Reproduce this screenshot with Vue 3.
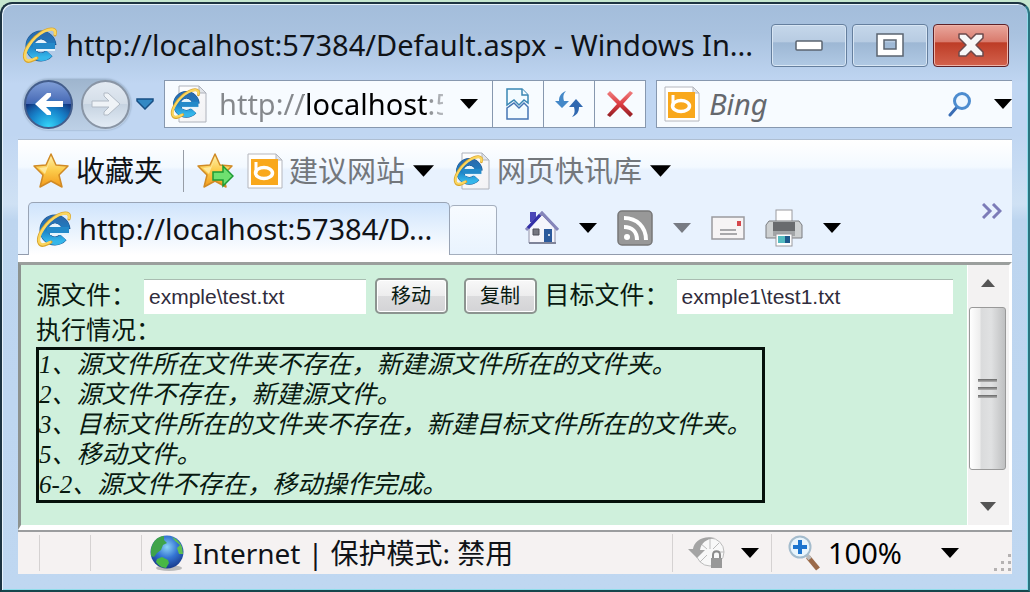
<script setup>
import { ref } from 'vue'

const address = ref('http://localhost:57384/Default.aspx')
const search = ref('')
const source = ref('exmple\\test.txt')
const target = ref('exmple1\\test1.txt')
const log = [
  '1、源文件所在文件夹不存在，新建源文件所在的文件夹。',
  '2、源文件不存在，新建源文件。',
  '3、目标文件所在的文件夹不存在，新建目标文件所在的文件夹。',
  '5、移动文件。',
  '6-2、源文件不存在，移动操作完成。'
]
</script>

<template>
  <svg class="sprites" width="0" height="0" aria-hidden="true">
    <defs>
      <linearGradient id="ieBlue" x1="0" y1="0" x2="0" y2="1">
        <stop offset="0" stop-color="#2a6cae" />
        <stop offset=".5" stop-color="#1c7fc4" />
        <stop offset="1" stop-color="#35b6ea" />
      </linearGradient>
      <linearGradient id="gold" x1="0" y1="0" x2="0" y2="1">
        <stop offset="0" stop-color="#fff3b0" />
        <stop offset=".5" stop-color="#fccb4a" />
        <stop offset="1" stop-color="#f39a1b" />
      </linearGradient>
      <linearGradient id="paper" x1="0" y1="0" x2="1" y2="1">
        <stop offset="0" stop-color="#ffffff" />
        <stop offset="1" stop-color="#f1f1f4" />
      </linearGradient>
    </defs>
    <symbol id="ie" viewBox="0 0 36 36">
      <circle cx="19" cy="19" r="11" fill="none" stroke="#1c5590" stroke-width="9" stroke-dasharray="60 10" stroke-dashoffset="-8" />
      <circle cx="19" cy="19" r="11" fill="none" stroke="url(#ieBlue)" stroke-width="8" stroke-dasharray="59 10" stroke-dashoffset="-8" />
      <path d="M11 16h22v6H11z" fill="#2389c9" />
      <path d="M13 16q6-7 12 0z" fill="#e6f4fd" />
      <path d="M14 23h19" stroke="#e6f4fd" stroke-width="2" />
      <path d="M33 8C35 2 30 0 22 4C10 10 0 25 3 32C5 37 12 33 15 31" fill="none" stroke="#d9a62e" stroke-width="3" stroke-linecap="round" />
      <path d="M33 7C34 2 29 1 22 4.500C10 11 1 25 3.500 31.500C5 35 10 33 14 31" fill="none" stroke="#fbd65f" stroke-width="2.500" stroke-linecap="round" />
    </symbol>
    <symbol id="iepage" viewBox="0 0 38 38">
      <path d="M9 1H29L36 8V37H9z" fill="url(#paper)" stroke="#aeb2bb" />
      <path d="M29 1V8H36z" fill="#e1e4e9" stroke="#aeb2bb" />
      <svg x="0" y="3" width="31" height="31" viewBox="0 0 36 36"><use href="#ie" /></svg>
    </symbol>
    <symbol id="bingpage" viewBox="0 0 36 36">
      <path d="M1 1H29L35 7V35H1z" fill="#fff" stroke="#b4b6bd" />
      <path d="M29 1V7H35z" fill="#e4e6ea" stroke="#b4b6bd" />
      <path d="M4 6H31V32H4z" fill="#f9a81c" />
      <path d="M9 9V20" stroke="#fff" stroke-width="3" />
      <ellipse cx="17" cy="20" rx="8.500" ry="5.500" fill="none" stroke="#fff" stroke-width="3.500" />
    </symbol>
    <symbol id="star" viewBox="0 0 38 38">
      <path d="M19 2L24 13L36 14L27 23L30 35L19 29L8 35L11 23L2 14L14 13z" fill="url(#gold)" stroke="#d08a25" stroke-width="1.500" stroke-linejoin="round" />
      <path d="M19 6L15 15L7 16L13 22z" fill="#fff8cc" opacity=".6" />
    </symbol>
    <symbol id="down" viewBox="0 0 18 10">
      <path d="M0 0H18L9 10z" fill="currentColor" />
    </symbol>
  </svg>

  <main class="window">
    <header class="titlebar">
      <svg class="i36"><use href="#ie" /></svg>
      <h1>http://localhost:57384/Default.aspx - Windows In...</h1>
      <button class="caption" aria-label="最小化">
        <svg width="28" height="11" viewBox="0 0 28 11"><rect x="1" y="1" width="26" height="9" rx="1" fill="#fff" stroke="#5b6470" stroke-width="1.500" /></svg>
      </button>
      <button class="caption" aria-label="最大化">
        <svg width="28" height="24" viewBox="0 0 28 24"><path d="M1 1H27V23H1zM8 7V16H20V7z" fill="#fff" fill-rule="evenodd" stroke="#5b6470" stroke-width="1.500" /></svg>
      </button>
      <button class="caption close" aria-label="关闭">
        <svg width="28" height="24" viewBox="0 0 28 24"><path d="M2 1H9L14 6L19 1H26V5L19 12L26 19V23H19L14 18L9 23H2V19L9 12L2 5z" fill="#f7f7f7" stroke="#6b4a4c" stroke-width="1.500" stroke-linejoin="round" /></svg>
      </button>
    </header>

    <nav class="navbar">
      <div class="travel">
        <button class="round back" aria-label="后退">
          <svg width="28" height="28" viewBox="0 0 28 28"><path d="M0 14L12 3H16V6L11 11H28V17H11L16 22V25H12z" fill="#fff" /></svg>
        </button>
        <button class="round forward" aria-label="前进">
          <svg width="30" height="28" viewBox="0 0 30 28"><path d="M29 14L17 3H13V6L18 11H1V17H18L13 22V25H17z" fill="#eff3f7" stroke="#b1bac5" /></svg>
        </button>
      </div>
      <button class="plain recent" aria-label="最近的网页">
        <svg width="18" height="12" viewBox="0 0 18 12"><path d="M1 1H17V3L9 11L1 3z" fill="#3288c4" stroke="#174f84" stroke-width="1.500" /></svg>
      </button>
      <div class="addressbox">
        <svg class="i38"><use href="#iepage" /></svg>
        <input v-model="address" class="url" aria-label="地址" />
        <button class="plain urldrop" aria-label="显示地址"><svg class="arrow"><use href="#down" /></svg></button>
        <button class="cell" aria-label="兼容性视图">
          <svg width="24" height="32" viewBox="0 0 24 32" fill="#f3fbff" stroke="#3a87b4" stroke-width="1.500">
            <path d="M1 17V1H16L22 7V15L18 12L13 17L8 12z" /><path d="M16 1V7H22" />
            <path d="M1 20L8 15L13 20L18 15L22 19V31H1z" stroke="#4575b4" />
          </svg>
        </button>
        <button class="cell" aria-label="刷新">
          <svg width="28" height="26" viewBox="0 0 28 26">
            <path d="M11 0C6 2 4 5 4 10H0L7 17L14 10H9C8 6 8 3 11 0z" fill="#4488c8" />
            <path d="M17 26C22 24 24 21 24 16H28L21 8L14 16H19C20 20 20 23 17 26z" fill="#3068b0" />
          </svg>
        </button>
        <button class="cell" aria-label="停止">
          <svg width="26" height="26" viewBox="0 0 26 26">
            <defs><linearGradient id="stopRed" x1="0" y1="0" x2="0" y2="1"><stop offset="0" stop-color="#f08080" /><stop offset=".5" stop-color="#dc3c42" /><stop offset="1" stop-color="#8f1c22" /></linearGradient></defs>
            <path d="M3 0L13 10L23 0L26 2L16 13L26 23L23 26L13 16L3 26L0 24L10 13L0 3z" fill="url(#stopRed)" />
          </svg>
        </button>
      </div>
      <div class="searchbox">
        <svg class="i36"><use href="#bingpage" /></svg>
        <input v-model="search" class="query" placeholder="Bing" aria-label="搜索" />
        <button class="plain" aria-label="搜索">
          <svg width="24" height="25" viewBox="0 0 24 25" fill="none" stroke-linecap="round"><path d="M9 15L2 23" stroke="#3a6db5" stroke-width="3" /><circle cx="14" cy="9" r="7.500" fill="#eef7ff" stroke="#4d8ccf" stroke-width="3" /></svg>
        </button>
        <button class="plain searchdrop" aria-label="搜索选项"><svg class="arrow"><use href="#down" /></svg></button>
      </div>
    </nav>

    <section class="commands">
      <div class="favorites">
        <button class="plain"><svg class="i38"><use href="#star" /></svg><span class="dark">收藏夹</span></button>
        <span class="rule"></span>
        <button class="plain" aria-label="添加到收藏夹栏">
          <svg class="i38" viewBox="0 0 38 38"><use href="#star" /><path d="M17 20H27V14L37 24L27 34V28H17z" fill="#6fe070" stroke="#1d9a35" stroke-width="1.500" /></svg>
        </button>
        <button class="plain suggested"><svg class="i36"><use href="#bingpage" /></svg><span>建议网站</span><svg class="arrow big"><use href="#down" /></svg></button>
        <button class="plain slices"><svg class="i38"><use href="#iepage" /></svg><span>网页快讯库</span><svg class="arrow big"><use href="#down" /></svg></button>
      </div>

      <div class="tabs">
        <button class="tab"><svg class="i36"><use href="#ie" /></svg><span>http://localhost:57384/D...</span></button>
        <button class="newtab" aria-label="新选项卡"></button>
        <div class="tools">
          <button class="plain" aria-label="主页">
            <svg width="34" height="36" viewBox="0 0 34 36">
              <path d="M5 2H11V12H5z" fill="#4a46b8" />
              <path d="M4 18L17 5L30 18V33H4z" fill="#f5f5fb" stroke="#9292a8" />
              <path d="M1 20L17 3L33 20" fill="none" stroke="#8585ba" stroke-width="3" />
              <path d="M3 18L15 5" stroke="#332fa8" stroke-width="3" />
              <path d="M8 19H14V25H8z" fill="#777780" stroke="#4f4f58" />
              <path d="M19 19H27V33H19z" fill="#2c5a9c" />
              <path d="M4 33H31" stroke="#7f8499" stroke-width="2" />
              <circle cx="24" cy="25" r="1" fill="#fff" />
            </svg>
          </button>
          <button class="plain" aria-label="主页选项"><svg class="arrow"><use href="#down" /></svg></button>
          <button class="plain" aria-label="源">
            <svg width="36" height="36" viewBox="0 0 36 36">
              <rect x="1" y="1" width="34" height="34" rx="4" fill="#989898" stroke="#777" stroke-width="1.500" />
              <circle cx="10" cy="27" r="3" fill="#fff" />
              <path d="M7 17C15 17 20 22 20 30M7 8C20 8 29 17 29 30" fill="none" stroke="#fff" stroke-width="4" />
            </svg>
          </button>
          <button class="plain muted" aria-label="源选项"><svg class="arrow"><use href="#down" /></svg></button>
          <button class="plain" aria-label="阅读邮件">
            <svg width="34" height="24" viewBox="0 0 34 24">
              <rect x="1" y="1" width="32" height="22" fill="#f6f4f5" stroke="#9a9a9e" stroke-width="1.500" />
              <path d="M26 5H30V10H26z" fill="#d5484d" /><path d="M9 14H25M9 18H26" stroke="#8e8e92" stroke-width="1.500" />
            </svg>
          </button>
          <button class="plain" aria-label="打印">
            <svg width="38" height="38" viewBox="0 0 38 38">
              <rect x="11" y="1" width="16" height="14" fill="#fff" stroke="#9a9a9e" />
              <path d="M4 12H34L37 16V29H1V16z" fill="#cdd0d1" stroke="#7a7d80" />
              <path d="M8 13H30V23H8z" fill="#696b6e" />
              <path d="M8 22H30V27H8z" fill="#a2a5a7" />
              <rect x="11" y="25" width="16" height="12" fill="#fff" stroke="#9a9a9e" />
              <path d="M13 27H25V34H13z" fill="#54bbc0" /><path d="M20 27H25V34H20z" fill="#1f5a8c" />
            </svg>
          </button>
          <button class="plain" aria-label="打印选项"><svg class="arrow"><use href="#down" /></svg></button>
        </div>
        <button class="plain more" aria-label="更多">
          <svg width="20" height="16" viewBox="0 0 20 16" fill="none" stroke="#7c7cb8" stroke-width="3"><path d="M1 1L8 8L1 15M11 1L18 8L11 15" /></svg>
        </button>
      </div>
    </section>

    <section class="viewport">
      <form class="page" @submit.prevent>
        <div class="row">
          <label for="source">源文件：</label>
          <input id="source" v-model="source" class="field" />
          <button class="action">移动</button>
          <button class="action second">复制</button>
          <label for="target">目标文件：</label>
          <input id="target" v-model="target" class="field wide" />
        </div>
        <p class="status-label">执行情况：</p>
        <div class="log"><div v-for="line in log" :key="line">{{ line }}</div></div>
      </form>
      <div class="scroll">
        <button class="plain" aria-label="向上滚动"><svg width="14" height="8" viewBox="0 0 14 8"><path d="M0 8L7 0L14 8z" fill="#555" /></svg></button>
        <div class="thumb"><i></i><i></i><i></i></div>
        <button class="plain end" aria-label="向下滚动"><svg width="16" height="9" viewBox="0 0 16 9"><path d="M0 0H16L8 9z" fill="#555" /></svg></button>
      </div>
    </section>

    <footer class="statusbar">
      <span class="slot first"></span><span class="slot"></span><span class="slot"></span>
      <div class="zone">
        <svg width="36" height="36" viewBox="0 0 36 36">
          <defs><radialGradient id="sea" cx=".5" cy=".35" r=".65"><stop offset="0" stop-color="#8cd4f7" /><stop offset=".5" stop-color="#3575d4" /><stop offset="1" stop-color="#173a8c" /></radialGradient></defs>
          <ellipse cx="20" cy="33" rx="13" ry="3" fill="#bbb" />
          <circle cx="18" cy="17" r="16.500" fill="url(#sea)" />
          <path d="M2 14C4 6 9 1 15 1L15 5L18 8L14 10L12 15L8 18L5 22L2 21z" fill="#3fa34a" />
          <path d="M8 24L13 22L19 25L20 28L17 33C13 33 9 30 7 27z" fill="#48b844" />
          <path d="M23 2C28 4 31 7 33 12L34 19L30 19L28 13L31 10L26 6z" fill="#5fc050" />
        </svg>
        <span>Internet | 保护模式: 禁用</span>
      </div>
      <button class="plain protect" aria-label="InPrivate 筛选">
        <svg width="38" height="36" viewBox="0 0 38 36">
          <circle cx="22" cy="17" r="14" fill="#f8f8f8" stroke="#bcbcbc" />
          <path d="M22 3V14M36 17H25M12 27L19 20M12 8L19 14M31 8L25 14" stroke="#bbb" />
          <path d="M27 3C15 0 6 6 5 14H0L9 23L17 15H12C13 8 18 4 27 3z" fill="#a4a4a4" />
          <path d="M25 23V20C25 15 32 15 32 20V23" fill="none" stroke="#8b8b8b" stroke-width="2" /><rect x="23" y="23" width="11" height="10" fill="#989898" />
        </svg>
        <svg class="arrow"><use href="#down" /></svg>
      </button>
      <button class="plain zoom">
        <svg width="34" height="36" viewBox="0 0 34 36">
          <path d="M20 22L30 34" stroke="#9b6a49" stroke-width="5" /><path d="M19 20L22 24" stroke="#bbb" stroke-width="4" />
          <circle cx="12" cy="12" r="10.500" fill="#e8f5fd" stroke="#a4bccd" stroke-width="2" />
          <path d="M12 5V19M5 12H19" stroke="#1d75cf" stroke-width="4" />
        </svg>
        <span>100%</span>
        <svg class="arrow"><use href="#down" /></svg>
      </button>
      <svg class="grip" width="18" height="18" viewBox="0 0 18 18" fill="#b5b2b2"><path d="M14 0h3v3h-3zM7 7h3v3H7zM14 7h3v3h-3zM0 14h3v3H0zM7 14h3v3H7zM14 14h3v3h-3z" /></svg>
    </footer>
  </main>
</template>

<style>
html { background: #c5e6cf; }
body { margin: 0; }
</style>

<style scoped>
* { box-sizing: border-box; }
.sprites { position: absolute; }
svg { flex: none; display: block; }
.window {
  display: flex;
  flex-direction: column;
  min-height: calc(100vh - 2px);
  margin-top: 2px;
  padding: 0 16px;
  border: 2px solid #1d3442;
  border-right-color: #2a7480;
  border-bottom-color: #16474d;
  border-radius: 12px 12px 0 0;
  background: linear-gradient(#a3bddb 0, #a9c2df 30px, #c0d6f2 80px, #c0d6f2 130px, #cfe1f4 200px, #bdd5ef 216px, #bfd7f1 100%);
  box-shadow: inset 1px 1px 0 #e8f3fc, inset -1px -1px 0 #8fdcea;
  color: #101318;
  font: 29px/40px "Noto Sans", "Noto Sans CJK SC", sans-serif;
}
button { font: inherit; color: inherit; padding: 0; cursor: pointer; }
input { font: inherit; min-width: 0; outline: 0; }
.plain { display: flex; align-items: center; flex: none; border: 0; background: none; color: #000; }
.arrow { width: 18px; height: 10px; }
.arrow.big { width: 21px; height: 12px; }
.i36 { width: 36px; height: 36px; }
.i38 { width: 38px; height: 38px; }

.titlebar { display: flex; align-items: center; gap: 5px; height: 75px; padding: 7px 3px 0 4px; }
h1 { flex: 1; min-width: 0; margin: 0 0 0 3px; overflow: hidden; white-space: nowrap; font: inherit; }
.caption {
  display: flex; align-items: center; justify-content: center; flex: none;
  width: 76px; height: 43px;
  border: 1px solid #657f9e; border-radius: 4px;
  background: linear-gradient(#c5d7ea 0, #b7cbe2 42%, #9db7d4 43%, #b0c9e4 100%);
  box-shadow: inset 0 0 0 1px #d8e6f4;
}
.caption.close {
  border-color: #5e2128;
  background: linear-gradient(#e9a79d 0, #d8796b 42%, #bd3c26 43%, #d3624d 100%);
  box-shadow: inset 0 0 0 1px #eeb4a9;
}

.navbar { display: flex; align-items: center; height: 52px; padding-bottom: 2px; }
.travel {
  display: flex; gap: 8px; flex: none; padding: 1px; margin-left: 5px;
  border-radius: 26px; background: linear-gradient(#9eb5ce, #bdd0e6); box-shadow: 0 0 2px #7d93ab;
}
.round { display: flex; align-items: center; justify-content: center; width: 49px; height: 49px; border-radius: 50%; }
.back { border: 2px solid #435d8b; background: radial-gradient(circle at 50% 100%, #35d7fa 0, #1784cb 35%, transparent 60%), linear-gradient(#7f9ed7 0, #4568b4 48%, #11347d 50%, #1c62ae 100%); }
.forward { border: 2px solid #8995a5; background: linear-gradient(#e3eaf2, #d3dde8 49%, #c6d3e1 50%, #e2ebf5); }
.recent { margin: 0 10px 0 5px; }
.addressbox, .searchbox { display: flex; align-items: center; height: 48px; border: 1px solid #8798af; background: #f7fbff; }
.addressbox { flex: 485 1 0; min-width: 0; padding-left: 5px; }
.url {
  flex: 1; width: 0; height: 40px; margin-left: 11px; padding: 0; border: 0;
  color: transparent;
  background: linear-gradient(90deg, #85888c 85px, #000 85px, #000 208px, #85888c 208px, #b8bbc0 100%);
  background-clip: text;
}
.urldrop { margin: 0 14px 0 17px; }
.cell { display: flex; align-items: center; justify-content: center; flex: none; width: 51px; height: 46px; border: 0; border-left: 1px solid #8798af; background: none; }
.searchbox { flex: 355 1 0; min-width: 0; margin-left: 10px; padding-left: 7px; border-right: 0; }
.query { flex: 1; width: 0; height: 40px; margin-left: 9px; padding: 0; border: 0; background: none; font-style: italic; }
.query::placeholder { color: #65686d; opacity: 1; }
.searchdrop { margin-left: 22px; }

.commands { flex: none; margin-top: 8px; border-top: 1px solid #aebed2; background: linear-gradient(#fff 0, #f3f9ff 27px, #e8f2fe 30px, #e8f2fe 100%); }
.favorites { display: flex; align-items: center; height: 62px; padding-left: 14px; }
.favorites .plain { color: #000; }
.favorites span { margin-left: 6px; color: #73777c; }
.favorites .dark { color: #101318; }
.favorites .big { margin-left: 8px; }
.favorites .rule { width: 1px; height: 42px; margin: 0 12px 0 20px; background: #979da6; }
.suggested { margin-left: 13px; }
.slices { margin-left: 19px; }
.tabs {
  display: flex; align-items: flex-end; height: 60px; padding-left: 10px; padding-bottom: 7px;
  background: linear-gradient(#fff, #fff) 0 53px / 100% 7px no-repeat, linear-gradient(#929bac, #929bac) 0 52px / 100% 1px no-repeat;
}
.tab {
  display: flex; align-items: center; flex: 0 1 422px; min-width: 0; height: 53px; padding: 0 7px;
  border: 1px solid #99a4b5; border-bottom: 0; border-radius: 5px 5px 0 0;
  background: linear-gradient(#cfe4fc, #fff); text-align: left; white-space: nowrap;
}
.tab span { margin-left: 7px; overflow: hidden; }
.newtab { flex: none; width: 47px; height: 50px; border: 1px solid #a5afbe; border-left: 0; border-radius: 4px 4px 0 0; background: linear-gradient(#f7fbff, #e9f3fe); }
.tools { display: flex; align-items: center; gap: 20px; height: 54px; margin-left: 28px; }
.tools .muted { color: #777b83; }
.more { height: 36px; margin-left: auto; margin-right: 10px; align-self: flex-start; padding-bottom: 18px; }

.viewport { display: flex; flex: 1; border: 3px solid #8c9290; border-top-color: #9b9f9d; border-right-color: #fff; border-bottom: 5px solid #fff; background: #cff0dc; }
.page { flex: 1; min-width: 0; padding: 13px 0 22px 15px; color: #081910; font: 25px/30px "Liberation Serif", "Noto Sans CJK SC", serif; }
.row { display: flex; align-items: center; height: 36px; padding-right: 14px; }
label { flex: none; white-space: nowrap; }
.field { flex: 220 1 0; width: 0; height: 35px; margin: 0 9px 0 8px; padding: 0 5px; border: 0; border-top: 1px solid #a9bdb1; background: #fff; color: #302c3c; font: 21px/30px "Liberation Sans", sans-serif; }
.field.wide { flex-grow: 277; margin-right: 0; margin-left: 7px; }
.action { flex: none; width: 73px; height: 36px; border: 2px solid #8c9490; border-radius: 5px; background: linear-gradient(#f8f8f8 0, #ededee 49%, #dcdcde 50%, #d3d3d6 100%); box-shadow: inset 0 0 0 1px #fff; font: 20px/28px "Liberation Sans", "Noto Sans CJK SC", sans-serif; }
.action.second { margin: 0 8px 0 16px; }
.status-label { margin: 2px 0 1px; }
.log { width: 729px; max-width: 100%; border: 3px solid #06110b; font-style: italic; line-height: 30px; }
.scroll { display: flex; flex-direction: column; flex: none; align-items: center; width: 42px; padding: 14px 2px 14px 0; background: #f3f2f2; border-left: 1px solid #fff; }
.thumb { display: flex; flex-direction: column; align-items: center; justify-content: center; gap: 5px; flex: none; width: 37px; height: 163px; margin-top: 20px; border: 1px solid #999; border-radius: 3px; background: linear-gradient(90deg, #fff 0, #eee 28%, #dadbdc 32%, #e0e1e2 60%, #bfc0c1 100%); }
.thumb i { width: 19px; height: 3px; background: linear-gradient(#666, #b2b2b2); }
.end { margin-top: auto; }

.statusbar { display: flex; align-items: center; flex: none; height: 44px; margin-bottom: 16px; border-top: 2px solid #9b9d9f; background: #f5f2f2; }
.slot { width: 51px; height: 36px; border-right: 1px solid #d5d2d2; }
.slot.first { width: 22px; }
.zone { display: flex; align-items: center; flex: 1; gap: 8px; white-space: nowrap; padding-left: 7px; font-size: 28px; }
.protect { gap: 15px; height: 38px; padding: 0 12px 0 15px; border-left: 1px solid #d5d2d2; }
.zoom { height: 38px; padding-left: 16px; border-left: 1px solid #d5d2d2; }
.zoom span { width: 77px; margin: 0 36px 0 6px; text-align: left; }
.grip { align-self: flex-end; margin: 0 0 2px 35px; }
</style>
